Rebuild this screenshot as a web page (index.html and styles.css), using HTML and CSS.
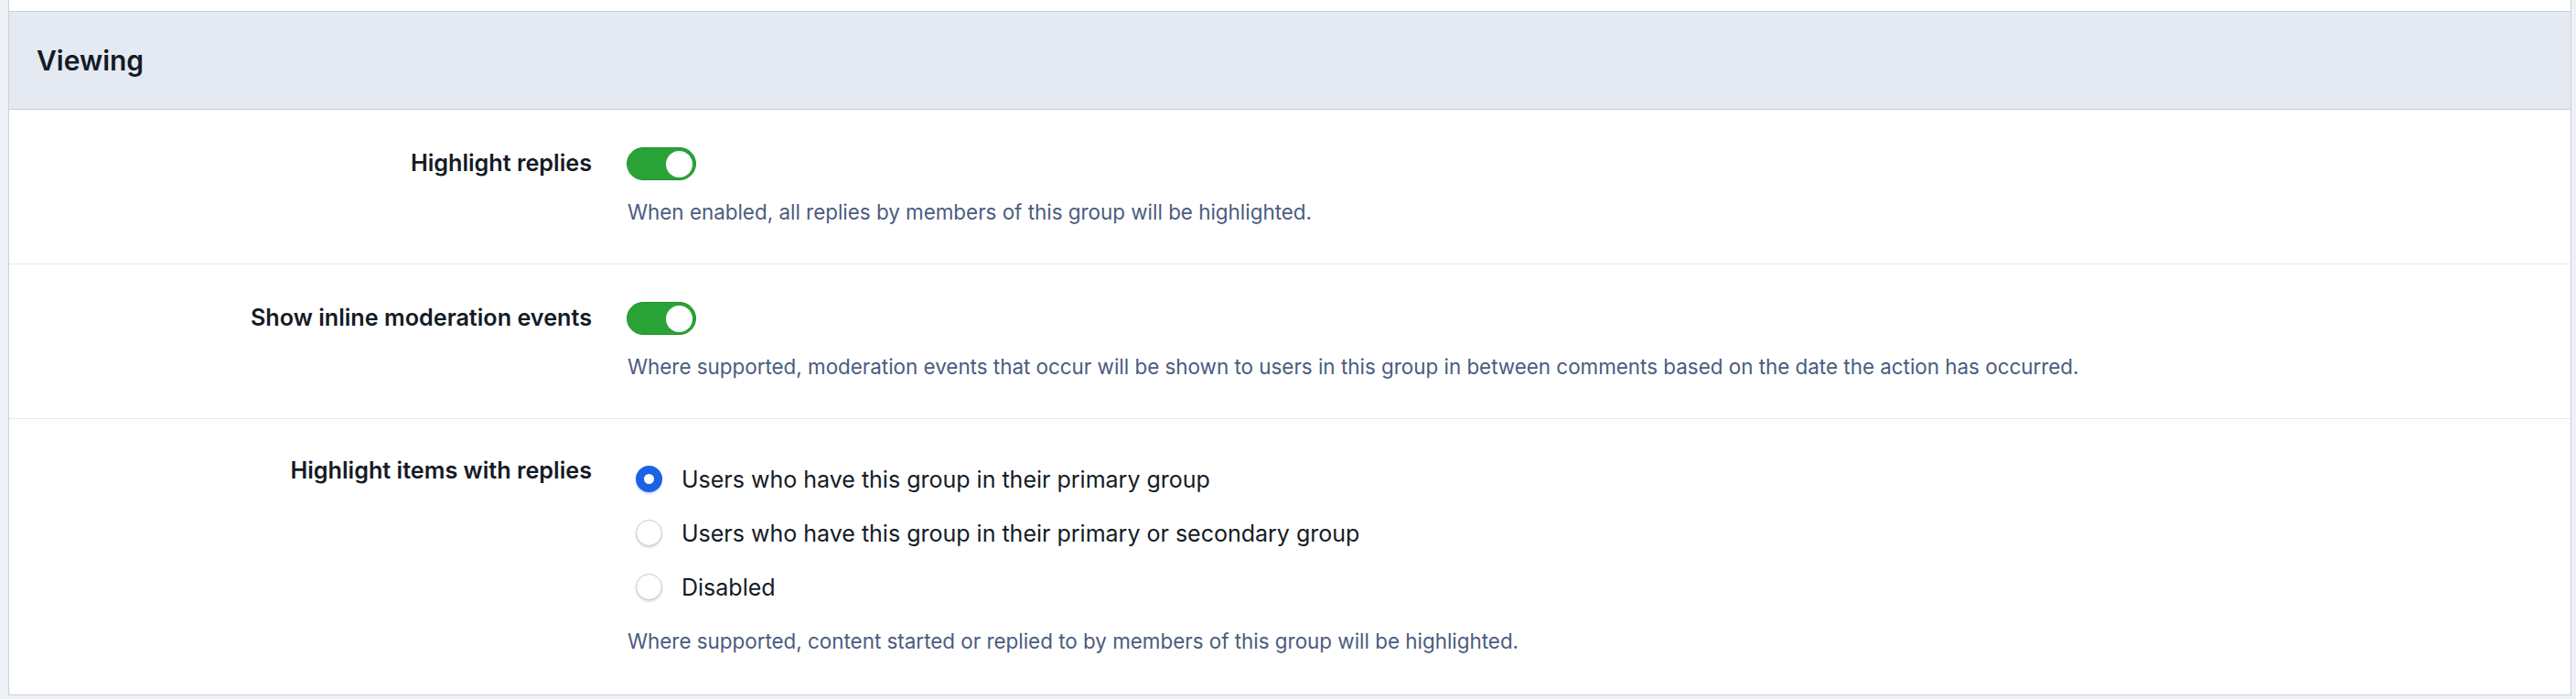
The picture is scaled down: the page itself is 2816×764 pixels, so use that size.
FILE: index.html
```html
<!DOCTYPE html>
<html>
  <head>
    <title>Group options</title>
    <link rel="stylesheet" href="styles.css">
  </head>
  <body>
    <div class="block">
      <div class="block-top"></div>
      <h2 class="block-header">Viewing</h2>

      <div class="block-body">
        <dl class="form-row">
          <dt>Highlight replies</dt>
          <dd>
            <span class="toggle is-on"><span class="toggle-knob"></span></span>
            <p class="form-explain">When enabled, all replies by members of this group will be highlighted.</p>
          </dd>
        </dl>

        <dl class="form-row">
          <dt>Show inline moderation events</dt>
          <dd>
            <span class="toggle is-on"><span class="toggle-knob"></span></span>
            <p class="form-explain">Where supported, moderation events that occur will be shown to users in this group in between comments based on the date the action has occurred.</p>
          </dd>
        </dl>

        <dl class="form-row form-row--choices">
          <dt>Highlight items with replies</dt>
          <dd>
            <ul class="choice-list">
              <li><span class="radio is-checked"></span>Users who have this group in their primary group</li>
              <li><span class="radio"></span>Users who have this group in their primary or secondary group</li>
              <li><span class="radio"></span>Disabled</li>
            </ul>
            <p class="form-explain">Where supported, content started or replied to by members of this group will be highlighted.</p>
          </dd>
        </dl>
      </div>
    </div>
  </body>
</html>
```

FILE: styles.css
```css
body {
  margin: 0;
  padding: 0 5px 4px 9px;
  background: #eef1f6;
  font-family: Inter, "Noto Sans", sans-serif;
  color: #141b25;
}

.block {
  background: #fff;
  border: 1px solid #c9d2df;
  border-top: none;
}

/* bottom of the block above this one */
.block-top {
  height: 12px;
}

.block-header {
  margin: 0;
  height: 106px;
  display: flex;
  align-items: center;
  padding-left: 30px;
  background: #e4e9f2;
  border-top: 1px solid #c5cfdd;
  border-bottom: 1px solid #c5cfdd;
  font-size: 30px;
  font-weight: 600;
}

.form-row {
  display: grid;
  grid-template-columns: 657px 1fr;
  margin: 0;
  border-bottom: 1px solid #e7e9ec;
}

.form-row:last-child {
  border-bottom: none;
}

.form-row dt {
  padding: 40px 20px 0 0;
  text-align: right;
  font-size: 25.2px;
  line-height: 36px;
  font-weight: 600;
}

.form-row dd {
  margin: 0;
  padding: 41px 0 41px 18px;
}

.form-row--choices dt {
  padding-top: 38px;
}

.form-row--choices dd {
  padding-top: 36px;
  padding-bottom: 43px;
}

.form-explain {
  margin: 20px 0 0;
  padding-left: 1px;
  font-size: 22.4px;
  line-height: 30px;
  color: #4a5c80;
}

.form-row--choices .form-explain {
  margin-top: 15px;
}

/* on/off switch */
.toggle {
  display: flex;
  justify-content: flex-end;
  align-items: center;
  box-sizing: border-box;
  width: 76px;
  height: 36px;
  padding: 0 3px;
  border-radius: 18px;
  background: #ccd2da;
  border: 1px solid #b9c0c9;
}

.toggle.is-on {
  background: #29a335;
  border-color: #22902d;
}

.toggle-knob {
  width: 29px;
  height: 29px;
  border-radius: 50%;
  background: #fff;
}

/* radio choices */
.choice-list {
  list-style: none;
  margin: 0;
  padding: 0 0 0 10px;
}

.choice-list li {
  display: flex;
  align-items: center;
  gap: 21px;
  height: 59px;
  font-size: 25px;
  line-height: 36px;
}

.radio {
  flex: none;
  box-sizing: border-box;
  width: 29px;
  height: 29px;
  border-radius: 50%;
  background: #fff;
  border: 1px solid #c3c8d0;
  box-shadow: 0 2px 2px rgba(0, 0, 0, 0.12);
}

.radio.is-checked {
  border: 9.5px solid #1b62e6;
  box-shadow: 0 2px 2px rgba(27, 98, 230, 0.2);
}
```
